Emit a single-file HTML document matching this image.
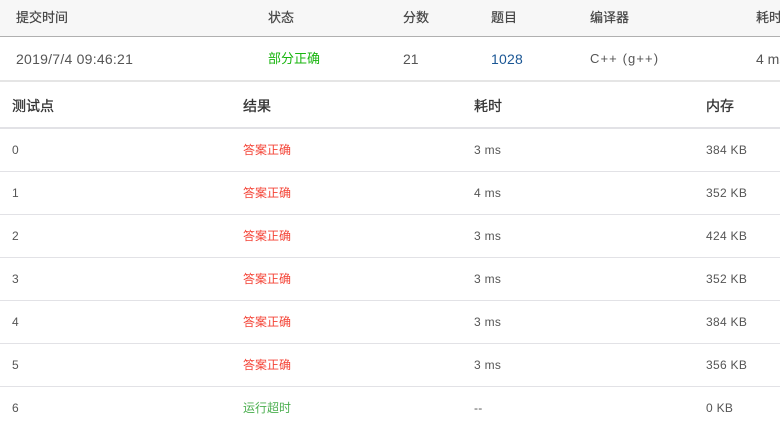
<!DOCTYPE html>
<html><head><meta charset="utf-8">
<style>
html,body{margin:0;padding:0;background:#fff}
body{position:relative;width:780px;height:423px;overflow:hidden;font-family:"Liberation Sans","Noto Sans CJK SC",sans-serif;color:#333}
.t{position:absolute;white-space:nowrap;line-height:18px;height:18px}
.l{position:absolute;left:0;width:780px}
.h{font-size:13px;color:#444;top:9px;-webkit-text-stroke:.2px #444}
.b{font-size:14px;color:#333;top:97px;-webkit-text-stroke:.3px #333}
.d{font-size:14px;color:#555;top:50px}
.s{font-size:12px;color:#555;letter-spacing:.3px}
.r{font-size:12px;color:#f44336}
.g{font-size:12px;color:#4caf50}
</style></head><body>
<div style="position:absolute;left:0;top:0;width:780px;height:36px;background:#f7f7f7"></div>
<div class="l" style="top:36px;height:1px;background:#b0b0b0"></div>
<div class="l" style="top:80px;height:2px;background:#e5e5e5"></div>
<div class="l" style="top:127px;height:2px;background:#e2e2e6"></div>
<div class="l" style="top:171px;height:1px;background:#e2e2e6"></div>
<div class="l" style="top:214px;height:1px;background:#e2e2e6"></div>
<div class="l" style="top:257px;height:1px;background:#e2e2e6"></div>
<div class="l" style="top:300px;height:1px;background:#e2e2e6"></div>
<div class="l" style="top:343px;height:1px;background:#e2e2e6"></div>
<div class="l" style="top:386px;height:1px;background:#e2e2e6"></div>

<div class="t h" style="left:16px">提交时间</div>
<div class="t h" style="left:268px">状态</div>
<div class="t h" style="left:403px">分数</div>
<div class="t h" style="left:491px">题目</div>
<div class="t h" style="left:590px">编译器</div>
<div class="t h" style="left:756px">耗时</div>

<div class="t d" style="left:16px;letter-spacing:.25px">2019/7/4 09:46:21</div>
<div class="t d" style="left:268px;font-size:13px;color:#19b50f">部分正确</div>
<div class="t d" style="left:403px">21</div>
<div class="t d" style="left:491px;color:#1a5694;letter-spacing:.2px">1028</div>
<div class="t d" style="left:590px;font-size:13px;letter-spacing:1.1px">C++ (g++)</div>
<div class="t d" style="left:756px">4 ms</div>

<div class="t b" style="left:12px">测试点</div>
<div class="t b" style="left:243px">结果</div>
<div class="t b" style="left:474px">耗时</div>
<div class="t b" style="left:706px">内存</div>

<div class="t s" style="left:12px;top:141px">0</div><div class="t r" style="left:243px;top:141px">答案正确</div><div class="t s" style="left:474px;top:141px">3 ms</div><div class="t s" style="left:706px;top:141px">384 KB</div>
<div class="t s" style="left:12px;top:184px">1</div><div class="t r" style="left:243px;top:184px">答案正确</div><div class="t s" style="left:474px;top:184px">4 ms</div><div class="t s" style="left:706px;top:184px">352 KB</div>
<div class="t s" style="left:12px;top:227px">2</div><div class="t r" style="left:243px;top:227px">答案正确</div><div class="t s" style="left:474px;top:227px">3 ms</div><div class="t s" style="left:706px;top:227px">424 KB</div>
<div class="t s" style="left:12px;top:270px">3</div><div class="t r" style="left:243px;top:270px">答案正确</div><div class="t s" style="left:474px;top:270px">3 ms</div><div class="t s" style="left:706px;top:270px">352 KB</div>
<div class="t s" style="left:12px;top:313px">4</div><div class="t r" style="left:243px;top:313px">答案正确</div><div class="t s" style="left:474px;top:313px">3 ms</div><div class="t s" style="left:706px;top:313px">384 KB</div>
<div class="t s" style="left:12px;top:356px">5</div><div class="t r" style="left:243px;top:356px">答案正确</div><div class="t s" style="left:474px;top:356px">3 ms</div><div class="t s" style="left:706px;top:356px">356 KB</div>
<div class="t s" style="left:12px;top:399px">6</div><div class="t g" style="left:243px;top:399px">运行超时</div><div class="t s" style="left:474px;top:399px">--</div><div class="t s" style="left:706px;top:399px">0 KB</div>
</body></html>
